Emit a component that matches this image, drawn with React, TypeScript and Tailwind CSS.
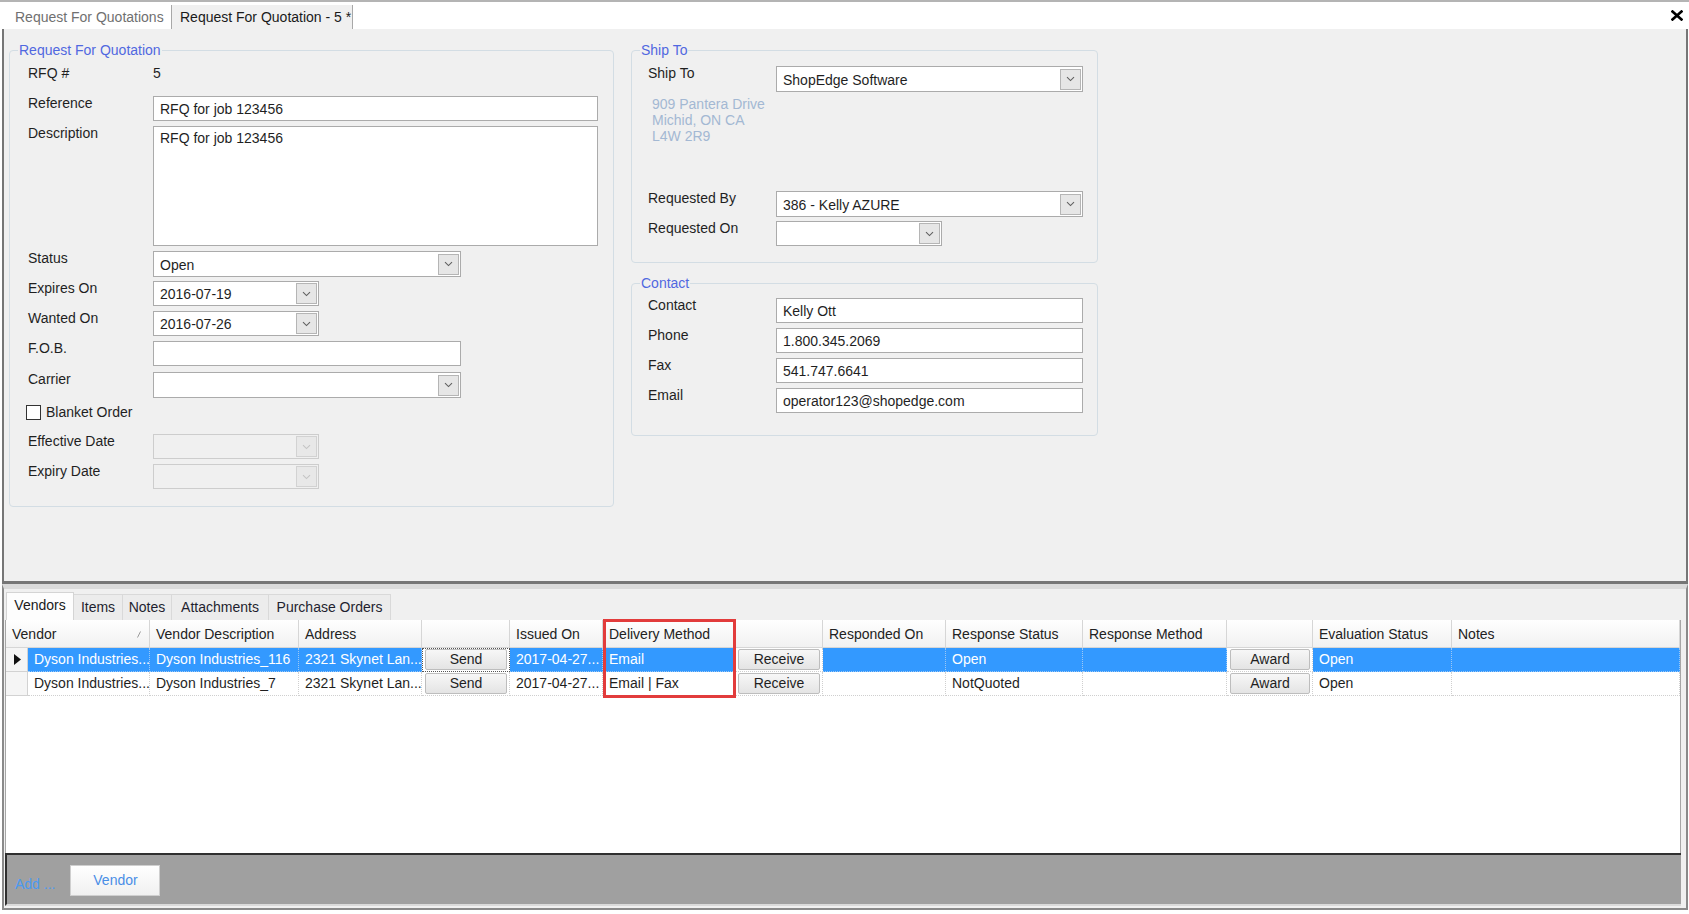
import React from 'react';

const Chevron: React.FC<{ disabled?: boolean }> = ({ disabled }) => (
  <svg width="9" height="6" viewBox="0 0 9 6">
    <path d="M1 1.2 L4.5 4.6 L8 1.2" fill="none" stroke={disabled ? '#c4c4c4' : '#606060'} strokeWidth="1.1" />
  </svg>
);

const DropButton: React.FC<{ disabled?: boolean }> = ({ disabled }) => (
  <div
    className={`w-[21px] h-[21px] mr-[1px] flex items-center justify-center border ${
      disabled ? 'border-[#d2d2d2] bg-[#e8e8e8]' : 'border-[#b5b5b5] bg-[#e6e6e6]'
    }`}
  >
    <Chevron disabled={disabled} />
  </div>
);

interface FieldProps {
  value?: string;
  className: string;
  disabled?: boolean;
}

const Combo: React.FC<FieldProps> = ({ value, className, disabled }) => (
  <div
    className={`flex items-center border ${
      disabled ? 'border-[#cdcdcd] bg-[#f0f0f0]' : 'border-[#ababab] bg-white'
    } ${className}`}
  >
    <span className="flex-1 pl-[6px] pt-[2px] whitespace-nowrap overflow-hidden">{value}</span>
    <DropButton disabled={disabled} />
  </div>
);

const TextBox: React.FC<FieldProps> = ({ value, className }) => (
  <div className={`flex items-center border border-[#ababab] bg-white pl-[6px] pt-[2px] whitespace-nowrap ${className}`}>
    {value}
  </div>
);

const Row: React.FC<{ label: string; w: string; h: string; children?: React.ReactNode }> = ({ label, w, h, children }) => (
  <div className={`flex items-start ${h}`}>
    <div className={`${w} leading-[14px] shrink-0`}>{label}</div>
    {children}
  </div>
);

const Group: React.FC<{ title: string; className: string; children: React.ReactNode }> = ({ title, className, children }) => (
  <fieldset className={`border border-[#d3dde4] rounded-[4px] ${className}`}>
    <legend className="ml-[8px] px-[1px] leading-[16px] text-[#5068e0]">{title}</legend>
    {children}
  </fieldset>
);

const cols =
  'grid grid-cols-[22px_122px_149px_123px_88px_93px_132px_88px_123px_137px_144px_86px_139px_228px]';

const HeadCell: React.FC<{ children?: React.ReactNode; className?: string }> = ({ children, className = '' }) => (
  <div
    className={`h-[28px] flex items-center pl-[6px] pt-[1px] border-r border-b border-[#d6d6d6] bg-linear-to-b from-white to-[#f1f1f1] text-[#222] whitespace-nowrap ${className}`}
  >
    {children}
  </div>
);

const Cell: React.FC<{ text?: string; selected?: boolean }> = ({ text, selected }) => (
  <div
    className={`h-[24px] flex items-center pl-[6px] pb-[1px] border-r border-b border-dotted whitespace-nowrap overflow-hidden ${
      selected ? 'bg-[#3399ff] text-white border-[#9cc8f5]' : 'bg-white text-[#1f1f1f] border-[#cfcfcf]'
    }`}
  >
    {text}
  </div>
);

const CellButton: React.FC<{ label: string; focus?: boolean }> = ({ label, focus }) => (
  <div
    className={`h-[24px] pt-[1px] pb-[1px] pl-[3px] pr-[2px] bg-white border-r border-b border-dotted border-[#cfcfcf] ${
      focus ? 'outline outline-1 outline-dotted outline-[#555] -outline-offset-1' : ''
    }`}
  >
    <div className="h-full flex items-center justify-center border border-[#bdbdbd] rounded-[2px] bg-linear-to-b from-[#f7f7f7] to-[#e4e4e4] text-[#1f1f1f]">
      {label}
    </div>
  </div>
);

const RowHead: React.FC<{ current?: boolean }> = ({ current }) => (
  <div className="h-[24px] flex items-center pl-[8px] bg-[#f5f5f5] border-r border-b border-[#d2d2d2]">
    {current && (
      <svg width="7" height="11" viewBox="0 0 7 11">
        <path d="M0 0 L7 5.5 L0 11 Z" fill="#111" />
      </svg>
    )}
  </div>
);

interface VendorRow {
  vendor: string;
  desc: string;
  address: string;
  issued: string;
  method: string;
  responded: string;
  status: string;
  respMethod: string;
  evaluation: string;
  notes: string;
}

const rows: VendorRow[] = [
  {
    vendor: 'Dyson Industries...',
    desc: 'Dyson Industries_116',
    address: '2321 Skynet Lan...',
    issued: '2017-04-27...',
    method: 'Email',
    responded: '',
    status: 'Open',
    respMethod: '',
    evaluation: 'Open',
    notes: '',
  },
  {
    vendor: 'Dyson Industries...',
    desc: 'Dyson Industries_7',
    address: '2321 Skynet Lan...',
    issued: '2017-04-27...',
    method: 'Email | Fax',
    responded: '',
    status: 'NotQuoted',
    respMethod: '',
    evaluation: 'Open',
    notes: '',
  },
];

const bottomTabs = [
  { label: 'Vendors', w: 'w-[68px]', active: true },
  { label: 'Items', w: 'w-[49px]' },
  { label: 'Notes', w: 'w-[49px]' },
  { label: 'Attachments', w: 'w-[97px]' },
  { label: 'Purchase Orders', w: 'w-[122px]' },
];

const App: React.FC = () => {
  return (
    <div className="w-[1689px] h-[914px] bg-white overflow-hidden font-['Liberation_Sans',Arial,sans-serif] text-[14px] text-[#1f1f1f]">
      {/* document tabs */}
      <div className="h-[29px] border-t-2 border-[#b4b4b4] flex items-end relative">
        <div className="w-[171px] h-[24px] flex items-center pl-[15px] text-[#707070]">Request For Quotations</div>
        <div className="w-[182px] h-[24px] flex items-center pl-[8px] bg-[#f0f0f0] border-l border-r border-[#a8a8a8] text-[#1a1a1a]">
          Request For Quotation - 5 *
        </div>
        <div className="flex-1" />
        <div className="h-[27px] flex items-center pr-[6px]">
          <svg width="12" height="11" viewBox="0 0 12 11">
            <path d="M1.5 1.5 L10.5 9.5 M10.5 1.5 L1.5 9.5" stroke="#000" strokeWidth="2.6" strokeLinecap="square" />
          </svg>
        </div>
      </div>

      {/* header panel */}
      <div className="h-[555px] ml-[2px] mr-[1px] bg-[#f0f0f0] border-l-2 border-r-2 border-b-[3px] border-[#767676] flex items-start gap-[17px] pl-[5px] pt-[13px]">
        <Group title="Request For Quotation" className="w-[605px]">
          <div className="pl-[18px] pt-[8px] pb-[17px]">
            <Row label="RFQ #" w="w-[125px]" h="h-[30px]">
              <span className="leading-[14px]">5</span>
            </Row>
            <Row label="Reference" w="w-[125px]" h="h-[30px]">
              <TextBox value="RFQ for job 123456" className="w-[445px] h-[25px]" />
            </Row>
            <Row label="Description" w="w-[125px]" h="h-[125px]">
              <div className="w-[445px] h-[120px] border border-[#ababab] bg-white pl-[6px] pt-[3px] leading-[16px]">
                RFQ for job 123456
              </div>
            </Row>
            <Row label="Status" w="w-[125px]" h="h-[30px]">
              <Combo value="Open" className="w-[308px] h-[26px]" />
            </Row>
            <Row label="Expires On" w="w-[125px]" h="h-[30px]">
              <Combo value="2016-07-19" className="w-[166px] h-[25px]" />
            </Row>
            <Row label="Wanted On" w="w-[125px]" h="h-[30px]">
              <Combo value="2016-07-26" className="w-[166px] h-[25px]" />
            </Row>
            <Row label="F.O.B." w="w-[125px]" h="h-[31px]">
              <TextBox className="w-[308px] h-[25px]" />
            </Row>
            <Row label="Carrier" w="w-[125px]" h="h-[33px]">
              <Combo className="w-[308px] h-[26px]" />
            </Row>
            <div className="h-[29px] flex items-start -ml-[2px]">
              <div className="w-[15px] h-[15px] border border-[#333] bg-white" />
              <span className="ml-[5px] leading-[15px]">Blanket Order</span>
            </div>
            <Row label="Effective Date" w="w-[125px]" h="h-[30px]">
              <Combo disabled className="w-[166px] h-[25px]" />
            </Row>
            <Row label="Expiry Date" w="w-[125px]" h="h-[25px]">
              <Combo disabled className="w-[166px] h-[25px]" />
            </Row>
          </div>
        </Group>

        <div className="w-[467px] flex flex-col">
          <Group title="Ship To" className="w-[467px]">
            <div className="pl-[16px] pt-[8px] pb-[16px]">
              <Row label="Ship To" w="w-[128px]" h="h-[26px]">
                <Combo value="ShopEdge Software" className="w-[307px] h-[26px]" />
              </Row>
              <div className="mt-[4px] ml-[4px] h-[95px] leading-[16px] text-[#a3b8d3]">
                <div>909 Pantera Drive</div>
                <div>Michid, ON CA</div>
                <div>L4W 2R9</div>
              </div>
              <Row label="Requested By" w="w-[128px]" h="h-[30px]">
                <Combo value="386 - Kelly AZURE" className="w-[307px] h-[26px]" />
              </Row>
              <Row label="Requested On" w="w-[128px]" h="h-[25px]">
                <Combo className="w-[166px] h-[25px]" />
              </Row>
            </div>
          </Group>

          <Group title="Contact" className="w-[467px] mt-[12px]">
            <div className="pl-[16px] pt-[7px] pb-[22px]">
              <Row label="Contact" w="w-[128px]" h="h-[30px]">
                <TextBox value="Kelly Ott" className="w-[307px] h-[25px]" />
              </Row>
              <Row label="Phone" w="w-[128px]" h="h-[30px]">
                <TextBox value="1.800.345.2069" className="w-[307px] h-[25px]" />
              </Row>
              <Row label="Fax" w="w-[128px]" h="h-[30px]">
                <TextBox value="541.747.6641" className="w-[307px] h-[25px]" />
              </Row>
              <Row label="Email" w="w-[128px]" h="h-[25px]">
                <TextBox value="operator123@shopedge.com" className="w-[307px] h-[25px]" />
              </Row>
            </div>
          </Group>
        </div>
      </div>

      {/* detail panel */}
      <div className="h-[326px] ml-[2px] mr-[1px] bg-[#f0f0f0] border-l-2 border-r-2 border-b-2 border-[#8a8a8a] border-t-[5px] border-t-[#dadada] pt-[3px]">
        <div className="h-[28px] flex items-end pl-[2px]">
          {bottomTabs.map((t) =>
            t.active ? (
              <div
                key={t.label}
                className={`${t.w} h-[28px] flex items-center justify-center pb-[2px] bg-[#fdfdfd] border border-b-0 border-[#d4d4d4] text-[#1a1a1a]`}
              >
                {t.label}
              </div>
            ) : (
              <div
                key={t.label}
                className={`${t.w} h-[26px] flex items-center justify-center border-t border-r border-[#d9d9d9] bg-[#ececec] text-[#1f1f2f]`}
              >
                {t.label}
              </div>
            )
          )}
        </div>

        <div className="ml-[1px] mr-[5px] h-[233px] bg-white border-l border-r border-[#a6a6a6] relative">
          <div className={cols}>
            <HeadCell className="col-span-2 justify-between pr-[8px]">
              <span>Vendor</span>
              <svg width="4" height="7" viewBox="0 0 4 7">
                <path d="M0.5 6.5 L3.5 0.5" stroke="#9a9a9a" strokeWidth="1" />
              </svg>
            </HeadCell>
            <HeadCell>Vendor Description</HeadCell>
            <HeadCell>Address</HeadCell>
            <HeadCell />
            <HeadCell>Issued On</HeadCell>
            <HeadCell>Delivery Method</HeadCell>
            <HeadCell />
            <HeadCell>Responded On</HeadCell>
            <HeadCell>Response Status</HeadCell>
            <HeadCell>Response Method</HeadCell>
            <HeadCell />
            <HeadCell>Evaluation Status</HeadCell>
            <HeadCell>Notes</HeadCell>

            {rows.map((r, i) => {
              const sel = i === 0;
              return (
                <React.Fragment key={i}>
                  <RowHead current={sel} />
                  <Cell text={r.vendor} selected={sel} />
                  <Cell text={r.desc} selected={sel} />
                  <Cell text={r.address} selected={sel} />
                  <CellButton label="Send" focus={sel} />
                  <Cell text={r.issued} selected={sel} />
                  <Cell text={r.method} selected={sel} />
                  <CellButton label="Receive" />
                  <Cell text={r.responded} selected={sel} />
                  <Cell text={r.status} selected={sel} />
                  <Cell text={r.respMethod} selected={sel} />
                  <CellButton label="Award" />
                  <Cell text={r.evaluation} selected={sel} />
                  <Cell text={r.notes} selected={sel} />
                </React.Fragment>
              );
            })}
          </div>

          {/* highlight annotation */}
          <div className="absolute left-[597px] top-[-1px] w-[133px] h-[79px] border-[3px] border-[#e23c3c] pointer-events-none" />
        </div>

        <div className="ml-[1px] mr-[5px] h-[53px] bg-[#a0a0a0] border-t-2 border-l-2 border-[#2f2f2f] border-b-2 border-b-[#dadada] flex items-start pl-[8px] pt-[10px]">
          <span className="mt-[11px] leading-[16px] text-[#4a9af2]">Add ...</span>
          <div className="ml-[15px] w-[90px] h-[31px] flex items-center justify-center border border-[#cfcfcf] bg-linear-to-b from-white to-[#f0f0f0] text-[#4a8ee6]">
            Vendor
          </div>
        </div>
      </div>
    </div>
  );
};

export default App;
